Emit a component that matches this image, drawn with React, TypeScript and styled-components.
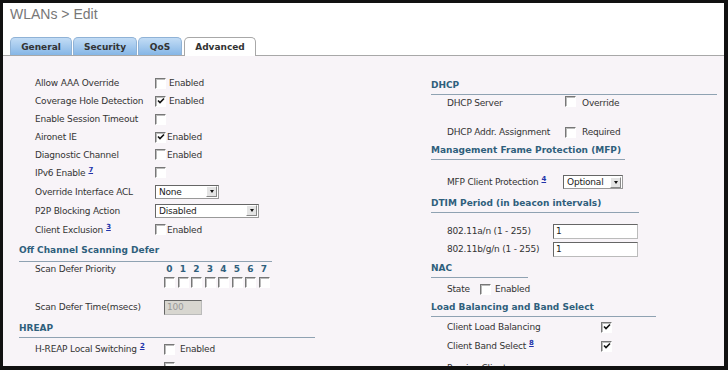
import React from "react";
import styled, { createGlobalStyle } from "styled-components";

const GlobalStyle = createGlobalStyle`
  html, body {
    margin: 0;
    padding: 0;
    background: #ffffff;
  }
  body {
    font-family: "DejaVu Sans", Verdana, sans-serif;
  }
`;

// outer black frame of the screenshot
const Frame = styled.div`
  box-sizing: border-box;
  width: 728px;
  height: 370px;
  border: 3px solid #111;
  border-right-width: 4px;
  border-bottom-width: 4px;
  background: #fff;
  overflow: hidden;
  display: flex;
  flex-direction: column;
`;

const Title = styled.div`
  flex-shrink: 0;
  font-family: "Liberation Sans", Arial, sans-serif;
  font-size: 14px;
  color: #777;
  padding: 3px 0 0 7px;
  height: 27px;
  box-sizing: border-box;
`;

const TabBar = styled.div`
  flex-shrink: 0;
  display: flex;
  align-items: flex-end;
  height: 23px;
  margin-top: 2px;
  padding-left: 7px;
  border-bottom: 1px solid #a8a8a8;
  gap: 1px;
`;

const Tab = styled.div<{ $active?: boolean; $w: number }>`
  box-sizing: border-box;
  width: ${(p) => p.$w}px;
  border: 1px solid ${(p) => (p.$active ? "#a8a8a8" : "#8fb2d6")};
  border-bottom: none;
  border-radius: 5px 5px 0 0;
  background: ${(p) =>
    p.$active ? "#fff" : "linear-gradient(#c2dcf5, #86b6e6)"};
  font-size: 9px;
  font-weight: bold;
  color: #333;
  display: flex;
  align-items: center;
  justify-content: center;
  margin-bottom: ${(p) => (p.$active ? "-1px" : "0")};
  height: ${(p) => (p.$active ? "19px" : "18px")};
  margin-left: ${(p) => (p.$active ? "1px" : "0")};
`;

const Content = styled.div`
  flex: 1;
  min-height: 0;
  overflow: hidden;
  background: #f8f4f8;
  display: flex;
  font-size: 9px;
  letter-spacing: -0.2px;
  color: #333;
`;

const LeftCol = styled.div`
  width: 296px;
  padding: 18px 0 0 16px;
  display: flex;
  flex-direction: column;
`;

const RightCol = styled.div`
  flex: 1;
  margin-left: 116px;
  padding-top: 20px;
  display: flex;
  flex-direction: column;
`;

const Row = styled.div<{ $h?: number; $mt?: number }>`
  flex-shrink: 0;
  height: ${(p) => p.$h ?? 18}px;
  margin-top: ${(p) => p.$mt ?? 0}px;
  display: flex;
  align-items: center;
  padding-left: 16px;
`;

const Label = styled.span<{ $w?: number }>`
  width: ${(p) => p.$w ?? 120}px;
  flex-shrink: 0;
  white-space: nowrap;
`;

const Header = styled.div<{ $w: number; $h?: number; $pb?: number }>`
  flex-shrink: 0;
  box-sizing: border-box;
  width: ${(p) => p.$w}px;
  height: ${(p) => p.$h ?? 19}px;
  border-bottom: 1px solid #8fa2b2;
  font-weight: bold;
  letter-spacing: 0;
  color: #2f5f7c;
  display: flex;
  align-items: flex-end;
  padding-bottom: ${(p) => p.$pb ?? 3}px;
  line-height: 11px;
`;

const Option = styled.span<{ $gap?: number }>`
  margin-left: ${(p) => p.$gap ?? 4}px;
`;

const Sup = styled.sup`
  font-size: 7px;
  color: #2233aa;
  text-decoration: underline;
  font-weight: bold;
  margin-left: 3px;
  vertical-align: 4px;
  line-height: 0;
`;

const Box = styled.span<{ $dy?: number }>`
  box-sizing: border-box;
  display: inline-flex;
  width: 11px;
  height: 11px;
  border: 1px solid #fff;
  border-top-color: #777;
  border-left-color: #777;
  box-shadow: inset 1px 1px 0 #bbb;
  background: #fff;
  flex-shrink: 0;
  align-items: center;
  justify-content: center;
  margin-top: ${(p) => (p.$dy ? p.$dy * 2 : 0)}px;
`;

const Check: React.FC<{ checked?: boolean; dy?: number }> = ({ checked, dy }) => (
  <Box $dy={dy}>
    {checked && (
      <svg width="8" height="8" viewBox="0 0 8 8">
        <path d="M1 3.5 L3 5.5 L7 1.5" stroke="#111" strokeWidth="1.6" fill="none" />
      </svg>
    )}
  </Box>
);

const SelectBox = styled.span<{ $w: number }>`
  box-sizing: border-box;
  display: inline-flex;
  align-items: center;
  justify-content: space-between;
  width: ${(p) => p.$w}px;
  height: 14px;
  border: 1px solid #999;
  border-top-color: #666;
  border-left-color: #666;
  background: #fff;
  padding-left: 3px;
  font-size: 9px;
  color: #222;
`;

const Arrow = styled.span`
  box-sizing: border-box;
  width: 11px;
  height: 11px;
  margin-right: 1px;
  background: #e4e4e4;
  border: 1px solid #fff;
  border-right-color: #888;
  border-bottom-color: #888;
  display: flex;
  align-items: center;
  justify-content: center;
  &::after {
    content: "";
    border-left: 2.5px solid transparent;
    border-right: 2.5px solid transparent;
    border-top: 3px solid #111;
  }
`;

const Select: React.FC<{ w: number; value: string }> = ({ w, value }) => (
  <SelectBox $w={w}>
    {value}
    <Arrow />
  </SelectBox>
);

const TextBox = styled.span<{ $w: number; $disabled?: boolean }>`
  box-sizing: border-box;
  display: inline-flex;
  align-items: center;
  width: ${(p) => p.$w}px;
  height: 15px;
  border: 1px solid #bbb;
  border-top-color: #666;
  border-left-color: #666;
  background: ${(p) => (p.$disabled ? "#d8d6d0" : "#fff")};
  color: ${(p) => (p.$disabled ? "#999" : "#222")};
  padding-left: 2px;
  font-size: 9px;
`;

const PriorityRow = styled.div`
  flex-shrink: 0;
  display: flex;
  align-items: flex-start;
  padding: 2px 0 0 16px;
  height: 26px;
  box-sizing: border-box;
  line-height: 11px;
`;

const PriorityGrid = styled.div`
  display: grid;
  grid-template-columns: repeat(8, 11px);
  column-gap: 2.5px;
  row-gap: 2px;
  justify-items: center;
`;

const Digit = styled.span`
  font-weight: bold;
  letter-spacing: 0;
  color: #2f5f7c;
`;

const checkRows: [string, boolean, boolean][] = [
  ["Allow AAA Override", false, true],
  ["Coverage Hole Detection", true, true],
  ["Enable Session Timeout", false, false],
];

const App: React.FC = () => {
  return (
    <>
      <GlobalStyle />
      <Frame>
        <Title>WLANs &gt; Edit</Title>
        <TabBar>
          <Tab $w={62}>General</Tab>
          <Tab $w={64}>Security</Tab>
          <Tab $w={44}>QoS</Tab>
          <Tab $w={72} $active>
            Advanced
          </Tab>
        </TabBar>
        <Content>
          <LeftCol>
            {checkRows.map(([label, checked, enabled]) => (
              <Row key={label}>
                <Label>{label}</Label>
                <Check checked={checked} />
                {enabled && <Option $gap={3}>Enabled</Option>}
              </Row>
            ))}
            <Row>
              <Label>Aironet IE</Label>
              <Check checked />
              <Option $gap={1}>Enabled</Option>
            </Row>
            <Row $h={17}>
              <Label>Diagnostic Channel</Label>
              <Check />
              <Option $gap={1}>Enabled</Option>
            </Row>
            <Row $h={19}>
              <Label>
                IPv6 Enable<Sup>7</Sup>
              </Label>
              <Check />
            </Row>
            <Row $h={19}>
              <Label>Override Interface ACL</Label>
              <Select w={64} value="None" />
            </Row>
            <Row $h={19}>
              <Label>P2P Blocking Action</Label>
              <Select w={104} value="Disabled" />
            </Row>
            <Row $h={19}>
              <Label>
                Client Exclusion<Sup>3</Sup>
              </Label>
              <Check />
              <Option $gap={1}>Enabled</Option>
            </Row>
            <Header $w={253} $h={23} $pb={5}>
              Off Channel Scanning Defer
            </Header>
            <PriorityRow>
              <Label $w={129}>Scan Defer Priority</Label>
              <PriorityGrid>
                {[0, 1, 2, 3, 4, 5, 6, 7].map((n) => (
                  <Digit key={n}>{n}</Digit>
                ))}
                {[0, 1, 2, 3, 4, 5, 6, 7].map((n) => (
                  <Check key={n} />
                ))}
              </PriorityGrid>
            </PriorityRow>
            <Row $h={16} $mt={11}>
              <Label $w={129}>Scan Defer Time(msecs)</Label>
              <TextBox $w={38} $disabled>
                100
              </TextBox>
            </Row>
            <Header $w={296} $h={23}>
              HREAP
            </Header>
            <Row $h={22}>
              <Label $w={129}>
                H-REAP Local Switching<Sup>2</Sup>
              </Label>
              <Check />
              <Option $gap={5}>Enabled</Option>
            </Row>
            <Row $h={14}>
              <Label $w={129}>&nbsp;</Label>
              <Check />
            </Row>
          </LeftCol>
          <RightCol>
            <Header $w={286} $h={19}>
              DHCP
            </Header>
            <Row $h={16}>
              <Label $w={118}>DHCP Server</Label>
              <Check dy={-1.5} />
              <Option $gap={6}>Override</Option>
            </Row>
            <Row $h={16} $mt={13}>
              <Label $w={118}>DHCP Addr. Assignment</Label>
              <Check />
              <Option $gap={6}>Required</Option>
            </Row>
            <Header $w={194} $h={20}>
              Management Frame Protection (MFP)
            </Header>
            <Row $h={16} $mt={14}>
              <Label $w={116}>
                MFP Client Protection<Sup>4</Sup>
              </Label>
              <Select w={60} value="Optional" />
            </Row>
            <Header $w={208} $h={23}>
              DTIM Period (in beacon intervals)
            </Header>
            <Row $h={16} $mt={10}>
              <Label $w={106}>802.11a/n (1 - 255)</Label>
              <TextBox $w={85}>1</TextBox>
            </Row>
            <Row $h={20}>
              <Label $w={106}>802.11b/g/n (1 - 255)</Label>
              <TextBox $w={85}>1</TextBox>
            </Row>
            <Header $w={97} $h={19}>
              NAC
            </Header>
            <Row $h={22}>
              <Label $w={33}>State</Label>
              <Check />
              <Option $gap={4}>Enabled</Option>
            </Row>
            <Header $w={225} $h={17}>
              Load Balancing and Band Select
            </Header>
            <Row $h={20}>
              <Label $w={154}>Client Load Balancing</Label>
              <Check checked />
            </Row>
            <Row $h={18}>
              <Label $w={154}>
                Client Band Select<Sup>8</Sup>
              </Label>
              <Check checked />
            </Row>
            <Row $h={26}>
              <Label $w={154}>Passive Client</Label>
            </Row>
          </RightCol>
        </Content>
      </Frame>
    </>
  );
};

export default App;
